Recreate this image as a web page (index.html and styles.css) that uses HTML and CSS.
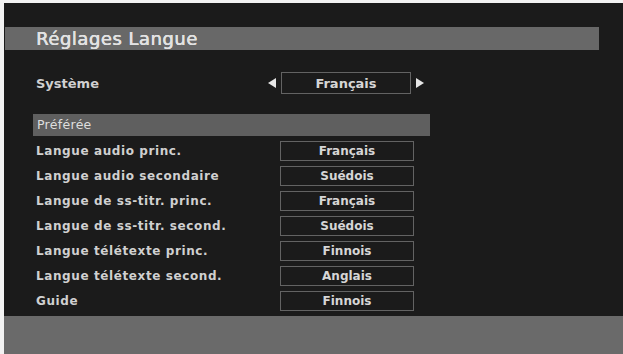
FILE: index.html
```html
<!DOCTYPE html>
<html lang="fr">
<head>
<meta charset="utf-8">
<title>Réglages Langue</title>
<link rel="stylesheet" href="styles.css">
</head>
<body>
<div class="screen">
  <div class="main">
    <div class="title-bar">Réglages Langue</div>
    <div class="content">
      <div class="system-row">
        <span class="label">Système</span>
        <div class="selector">
          <span class="arrow arrow-left"></span>
          <span class="sel-box">Français</span>
          <span class="arrow arrow-right"></span>
        </div>
      </div>
      <div class="section-bar">Préférée</div>
      <div class="rows">
        <div class="row"><span class="label">Langue audio princ.</span><span class="value">Français</span></div>
        <div class="row"><span class="label">Langue audio secondaire</span><span class="value">Suédois</span></div>
        <div class="row"><span class="label">Langue de ss-titr. princ.</span><span class="value">Français</span></div>
        <div class="row"><span class="label">Langue de ss-titr. second.</span><span class="value">Suédois</span></div>
        <div class="row"><span class="label">Langue télétexte princ.</span><span class="value">Finnois</span></div>
        <div class="row"><span class="label">Langue télétexte second.</span><span class="value">Anglais</span></div>
        <div class="row"><span class="label">Guide</span><span class="value">Finnois</span></div>
      </div>
    </div>
  </div>
  <div class="footer"></div>
</div>
</body>
</html>
```

FILE: styles.css
```css
* { box-sizing: border-box; }
html, body { margin: 0; padding: 0; }
body {
  background: #f2f2f2;
  width: 623px;
  height: 354px;
  overflow: hidden;
  font-family: "DejaVu Sans", sans-serif;
}
.screen {
  margin: 3px 0 0 4px;
  height: 351px;
  background: #1b1b1b;
  display: flex;
  flex-direction: column;
}
.main {
  flex: 1;
  display: flex;
  flex-direction: column;
}
.title-bar {
  margin: 24px 24px 0 1px;
  height: 23px;
  background: #686868;
  color: #e2e2e2;
  font-size: 18px;
  line-height: 23px;
  padding-left: 31px;
  letter-spacing: 0.5px;
  text-shadow: 0 0 0.6px #e2e2e2, 0.4px 0 0 #e2e2e2;
}
.content {
  margin-left: 29px;
  width: 397px;
  display: flex;
  flex-direction: column;
}
.system-row {
  margin-top: 22px;
  height: 22px;
  display: flex;
  align-items: center;
}
.label {
  color: #d0d0d0;
  font-size: 12px;
  font-weight: bold;
  padding-left: 3px;
  letter-spacing: 0.6px;
}
.system-row .label {
  width: 235px;
  font-size: 13px;
  letter-spacing: 0;
}
.selector {
  display: flex;
  align-items: center;
  gap: 5px;
}
.arrow {
  width: 0;
  height: 0;
  border-top: 5px solid transparent;
  border-bottom: 5px solid transparent;
}
.arrow-left { border-right: 8px solid #e6e6e6; }
.arrow-right { border-left: 8px solid #e6e6e6; }
.sel-box {
  width: 130px;
  height: 22px;
  border: 1.5px solid #636363;
  color: #d6d6d6;
  font-size: 13px;
  font-weight: bold;
  display: flex;
  align-items: center;
  justify-content: center;
}
.section-bar {
  margin-top: 20px;
  height: 22px;
  background: #5f5f5f;
  color: #dedede;
  font-size: 12.5px;
  line-height: 22px;
  padding-left: 4px;
  letter-spacing: 0.3px;
}
.rows {
  margin-top: 5px;
  display: flex;
  flex-direction: column;
  gap: 5px;
}
.row {
  height: 20px;
  display: flex;
  align-items: center;
}
.row .label { width: 247px; }
.value {
  width: 134px;
  height: 20px;
  border: 1.5px solid #636363;
  color: #d6d6d6;
  font-size: 12px;
  font-weight: bold;
  display: flex;
  align-items: center;
  justify-content: center;
}
.footer {
  height: 38px;
  background: #6a6a6a;
}
```
